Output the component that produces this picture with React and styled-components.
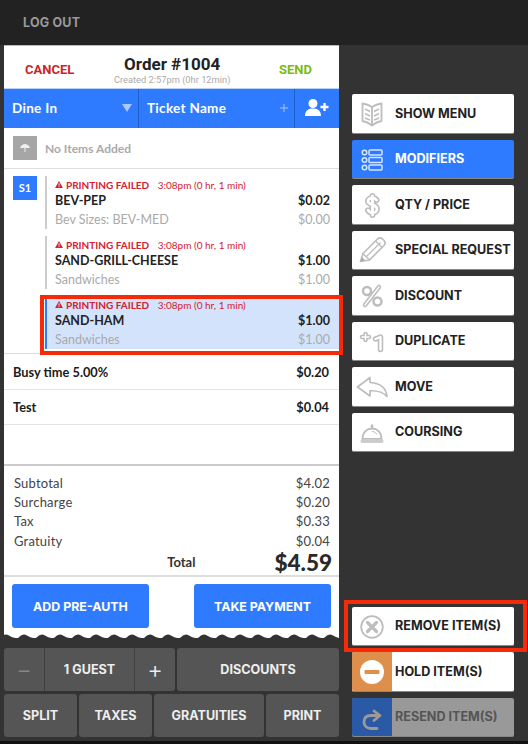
import React from "react"
import styled, { createGlobalStyle } from "styled-components"

const Global = createGlobalStyle`
  html, body { margin: 0; padding: 0; background: #333; }
  body { width: 528px; height: 744px; overflow: hidden; font-family: "Lato", "Liberation Sans", sans-serif; }
  * { box-sizing: border-box; }
`

const Page = styled.div`
  width: 528px;
  height: 744px;
  background: #333;
  display: flex;
  flex-direction: column;
  position: relative;
`
const TopBar = styled.div`
  height: 45px;
  flex: none;
  background: #222;
  color: #999;
  font: 700 12.5px "Inter", sans-serif;
  letter-spacing: 0.2px;
  padding: 0 23px;
  display: flex;
  align-items: center;
`
const Body = styled.div`
  flex: 1;
  display: flex;
  padding-left: 4px;
  min-height: 0;
`
const BottomStrip = styled.div`
  height: 3px;
  flex: none;
  background: #111;
`
const Left = styled.div`
  width: 335px;
  flex: none;
  display: flex;
  flex-direction: column;
`
const Ticket = styled.div`
  height: 593px;
  flex: none;
  background: #fff;
  display: flex;
  flex-direction: column;
  position: relative;
  border-top: 1px solid #bbb;
`
const Header = styled.div`
  height: 42px;
  flex: none;
  display: flex;
  justify-content: space-between;
  padding: 0 27px 0 21px;
  align-items: center;
`
const HeaderCenter = styled.div`
  display: flex;
  flex-direction: column;
  align-items: center;
  padding-top: 5px;
  margin-right: 9px;
`
const OrderTitle = styled.div`
  font: 700 17px/20px "Roboto", sans-serif;
  color: #222;
`
const Created = styled.div`
  font: 400 9.3px/11px "Roboto", sans-serif;
  color: #aaa;
`
const HeaderAction = styled.div`
  font: 700 13px "Roboto", sans-serif;
  color: ${p => p.$color};
  padding-top: 5px;
`
const BlueBar = styled.div`
  height: 40px;
  flex: none;
  display: flex;
  background: #2f7bff;
  color: #fff;
  border-top: 1px solid #b9d2f5;
  font: 700 13.5px "Lato", sans-serif;
  letter-spacing: 0.3px;
`
const BlueCell = styled.div`
  width: ${p => p.$w}px;
  flex: none;
  display: flex;
  align-items: center;
  justify-content: space-between;
  padding: 0 6px 2px 8px;
  border-right: ${p => (p.$last ? "none" : "1px solid #1d5fcb")};
`
const EmptyRow = styled.div`
  height: 41px;
  flex: none;
  display: flex;
  align-items: center;
  gap: 8px;
  padding-left: 9px;
  border-bottom: 1px solid #ddd;
  color: #aaa;
  font: 700 12px "Lato", sans-serif;
`
const EmptyBox = styled.div`
  width: 24px;
  height: 24px;
  background: #a6a6a6;
  display: flex;
  align-items: center;
  justify-content: center;
`
const Seat = styled.div`
  height: 185px;
  flex: none;
  display: flex;
  padding: 7px 0 0 9px;
  border-bottom: 1px solid #ddd;
`
const SeatBadge = styled.div`
  width: 24px;
  height: 24px;
  flex: none;
  background: #2f7bff;
  color: #fff;
  font: 700 11px/24px "Lato", sans-serif;
  text-align: center;
`
const Items = styled.div`
  flex: 1;
  display: flex;
  flex-direction: column;
  gap: 7px;
  padding-left: 8px;
`
const Item = styled.div`
  height: 53px;
  padding: 2px 9px 0 8px;
  border-left: 2px solid ${p => (p.$selected ? "#2f7bff" : "#ccc")};
  background: ${p => (p.$selected ? "#d3e3fb" : "transparent")};
  position: relative;
`
const Failed = styled.div`
  display: flex;
  align-items: center;
  gap: 2px;
  height: 13px;
  color: #d3202f;
  font: 400 10px "Lato", sans-serif;
  strong { font-weight: 700; margin-right: 6.5px; }
`
const ItemLine = styled.div`
  display: flex;
  justify-content: space-between;
  align-items: center;
  height: ${p => (p.$sub ? 20 : 18)}px;
  color: ${p => (p.$sub ? "#aaa" : "#222")};
  font: ${p => (p.$sub ? 400 : 700)} 12.5px "Lato", sans-serif;
`
const ChargeRow = styled.div`
  height: ${p => p.$h}px;
  flex: none;
  display: flex;
  justify-content: space-between;
  align-items: center;
  padding: 0 10px 0 9px;
  border-bottom: 1px solid #e4e4e4;
  color: #1c1c1c;
  font: 700 12.8px "Lato", sans-serif;
`
const Gap = styled.div`
  height: 41px;
  flex: none;
  border-bottom: 2px solid #ccc;
`
const Totals = styled.div`
  height: 111px;
  flex: none;
  padding: 7px 9px 0 10px;
  border-bottom: 2px solid #ddd;
`
const TotalLine = styled.div`
  height: 19.3px;
  display: flex;
  justify-content: space-between;
  align-items: center;
  color: #444;
  font: 400 13px "Lato", sans-serif;
  letter-spacing: 0.2px;
`
const GrandLine = styled.div`
  display: flex;
  justify-content: flex-end;
  align-items: center;
  gap: 79px;
  margin-right: -2px;
  height: 24px;
  color: #333;
`
const GrandLabel = styled.span`
  font: 700 13px "Lato", sans-serif;
`
const GrandValue = styled.span`
  font: 900 22.5px "Lato", sans-serif;
  color: #2a2a2a;
`
const Payments = styled.div`
  display: flex;
  justify-content: space-between;
  padding: 7px 8px 0 8px;
`
const PayButton = styled.div`
  width: 137px;
  height: 44px;
  background: #2f7bff;
  border-radius: 3px;
  color: #fff;
  font: 700 12.4px "Inter", sans-serif;
  display: flex;
  align-items: center;
  justify-content: center;
`
const WaveEdge = styled.svg`
  position: absolute;
  left: 0;
  bottom: 0;
  display: block;
`
const Controls = styled.div`
  margin-top: 10px;
  display: flex;
  flex-direction: column;
  gap: 3px;
`
const ControlRow = styled.div`
  display: flex;
  gap: 2px;
  height: 43px;
`
const Guests = styled.div`
  width: 171px;
  flex: none;
  display: flex;
  background: #555;
  border-radius: 3px;
`
const GuestCell = styled.div`
  width: ${p => p.$w}px;
  flex: none;
  display: flex;
  align-items: center;
  justify-content: center;
  color: ${p => p.$color || "#eee"};
  font: ${p => (p.$big ? "300 24px" : "700 12.6px")} "Inter", sans-serif;
  border-right: ${p => (p.$divided ? "1px solid #3f3f3f" : "none")};
`
const ControlButton = styled.div`
  flex: ${p => (p.$w ? `none` : 1)};
  width: ${p => (p.$w ? `${p.$w}px` : "auto")};
  background: #555;
  border-radius: 3px;
  color: #eee;
  font: 700 12.6px "Inter", sans-serif;
  display: flex;
  align-items: center;
  justify-content: center;
  padding-bottom: ${p => (p.$lift ? 1 : 0)}px;
`
const Side = styled.div`
  width: 162px;
  flex: none;
  margin-left: 13px;
  padding: 49px 0 4px;
  display: flex;
  flex-direction: column;
  gap: 6px;
`
const ActionButton = styled.div`
  height: 39.5px;
  flex: none;
  display: flex;
  align-items: center;
  border-radius: 2px;
  position: relative;
  background: ${p => p.$bg || "#fff"};
  color: ${p => p.$color || "#222"};
  font: 700 12.6px "Inter", sans-serif;
  border-bottom: 1px solid #888;
  margin-top: ${p => (p.$push ? "auto" : 0)};
`
const IconCell = styled.div`
  width: 40px;
  height: 100%;
  flex: none;
  background: ${p => p.$bg || "transparent"};
  border-radius: 2px 0 0 2px;
  margin-right: 3px;
`
const RedBox = styled.div`
  position: absolute;
  border: 4px solid #f52a09;
  pointer-events: none;
  left: ${p => p.$l}px;
  top: ${p => p.$t}px;
  width: ${p => p.$w}px;
  height: ${p => p.$h}px;
`

const GRAY = "#bdbdbd"

// two strokes on top of each other give the hollow outlined look of the icons
const Hollow = ({ d, w = 5, color = GRAY }) => (
  <>
    <path d={d} fill="none" stroke={color} strokeWidth={w} strokeLinecap="round" strokeLinejoin="round" />
    <path d={d} fill="none" stroke="#fff" strokeWidth={w - 3.2} strokeLinecap="round" strokeLinejoin="round" />
  </>
)

const Svg = ({ children }) => (
  <svg width="40" height="40" viewBox="0 0 40 40" style={{ display: "block" }}>{children}</svg>
)

const icons = {
  book: (
    <Svg>
      <path d="M20 13 C17 11 14 10 10.500 9.500 V27 C14 27.500 17 29 20 31.500 C23 29 26 27.500 29.500 27 V9.500 C26 10 23 11 20 13 Z M20 13 V31" fill="none" stroke={GRAY} strokeWidth="1.800" strokeLinejoin="round" />
      <path d="M13 15 L18 17.500 M13 19.500 L18 22 M13 24 L18 26 M27 15 L22 17.500 M27 19.500 L22 22 M27 24 L22 26" fill="none" stroke={GRAY} strokeWidth="1.500" />
    </Svg>
  ),
  modifiers: (
    <Svg>
      <g fill="none" stroke="#d6e5ff" strokeWidth="1.500">
        <circle cx="12.500" cy="12.500" r="2.300" />
        <circle cx="12.500" cy="20" r="2.300" />
        <circle cx="12.500" cy="27.500" r="2.300" />
        <rect x="17" y="10" width="13" height="5" rx="1" />
        <rect x="17" y="17.500" width="13" height="5" rx="1" />
        <rect x="17" y="25" width="13" height="5" rx="1" />
      </g>
    </Svg>
  ),
  dollar: (
    <Svg>
      <Hollow w={6} d="M24.500 15 C23.500 13.500 22 13 20.500 13 C18 13 16 14.300 16 16.300 C16 20.500 25 18.700 25 24 C25 26.300 23 27.700 20.500 27.700 C18.500 27.700 17 27 16 25.300 M20.500 11 V30" />
    </Svg>
  ),
  pencil: (
    <Svg>
      <path d="M8.500 30.500 L11 22.500 L25.500 8 C27 6.700 29 6.700 30.500 8 L32 9.500 C33.300 11 33.300 13 32 14.500 L17.500 29 Z" fill="#fff" stroke={GRAY} strokeWidth="1.700" strokeLinejoin="round" />
      <path d="M11 22.500 L17.500 29 M14.500 25.500 L28.500 11.500 M23.500 10 L30 16.500" fill="none" stroke={GRAY} strokeWidth="1.300" />
      <path d="M8.500 30.500 L9.800 26 L13.200 29.300 Z" fill="#aaa" />
    </Svg>
  ),
  percent: (
    <Svg>
      <Hollow w={4.500} d="M27 11 L13 29" />
      <circle cx="15" cy="15" r="4" fill="#fff" stroke={GRAY} strokeWidth="2.500" />
      <circle cx="25.500" cy="25.500" r="4" fill="#fff" stroke={GRAY} strokeWidth="2.500" />
    </Svg>
  ),
  plusOne: (
    <Svg>
      <Hollow w={4.600} d="M10 15 H17 M13.500 12 V18" />
      <Hollow w={5.500} d="M23.500 17 L28.500 15 V27.500" />
    </Svg>
  ),
  move: (
    <Svg>
      <path d="M5.500 20 L18 10.500 V15.500 C27 16 34 20 35 29.500 C31 25 26 23.500 18 23.800 V29 Z" fill="#fff" stroke={GRAY} strokeWidth="1.700" strokeLinejoin="round" />
    </Svg>
  ),
  bell: (
    <Svg>
      <path d="M10.500 26 C10.500 19 15 15.500 20 15.500 C25 15.500 29.500 19 29.500 26 Z" fill="#fff" stroke={GRAY} strokeWidth="1.800" />
      <path d="M20 15 V12.500" stroke={GRAY} strokeWidth="2.500" strokeLinecap="round" />
      <rect x="8.500" y="26" width="23" height="4" rx="2" fill="#ccc" />
      <path d="M20 18.500 C22 18.500 24 19.500 25 21.500" fill="none" stroke={GRAY} strokeWidth="1" />
    </Svg>
  ),
  remove: (
    <Svg>
      <circle cx="20" cy="20" r="10.800" fill="#fff" stroke={GRAY} strokeWidth="1.800" />
      <path d="M15.500 15.500 L24.500 24.500 M24.500 15.500 L15.500 24.500" stroke={GRAY} strokeWidth="3.200" strokeLinecap="round" />
    </Svg>
  ),
  hold: (
    <Svg>
      <circle cx="20" cy="20" r="12" fill="#fff" />
      <rect x="12.500" y="18" width="15" height="4" rx="1" fill="#dd8f4b" />
    </Svg>
  ),
  resend: (
    <Svg>
      <path d="M22 13 L28 17.500 L22 22.500 M27 17.500 H19 C14.500 17.500 12 20 12 24 C12 28 15 30.500 19 30.500 H25" fill="none" stroke="#9a9a9a" strokeWidth="2.800" strokeLinejoin="round" strokeLinecap="round" />
    </Svg>
  ),
}

const Warn = () => (
  <svg width="8" height="7" viewBox="0 0 9 8" style={{ marginRight: 1 }}>
    <path d="M4.500 0 L9 8 H0 Z" fill="#d3202f" />
    <rect x="4" y="2.600" width="1" height="2.800" fill="#fff" />
    <rect x="4" y="6" width="1" height="1" fill="#fff" />
  </svg>
)

const lineItems = [
  { name: "BEV-PEP", price: "$0.02", sub: "Bev Sizes: BEV-MED", subPrice: "$0.00" },
  { name: "SAND-GRILL-CHEESE", price: "$1.00", sub: "Sandwiches", subPrice: "$1.00" },
  { name: "SAND-HAM", price: "$1.00", sub: "Sandwiches", subPrice: "$1.00", selected: true },
]

const totals = [
  ["Subtotal", "$4.02"],
  ["Surcharge", "$0.20"],
  ["Tax", "$0.33"],
  ["Gratuity", "$0.04"],
]

const actions = [
  { label: "SHOW MENU", icon: "book" },
  { label: "MODIFIERS", icon: "modifiers", bg: "#2f7bff", color: "#fff" },
  { label: "QTY / PRICE", icon: "dollar" },
  { label: "SPECIAL REQUEST", icon: "pencil" },
  { label: "DISCOUNT", icon: "percent" },
  { label: "DUPLICATE", icon: "plusOne" },
  { label: "MOVE", icon: "move" },
  { label: "COURSING", icon: "bell" },
  { label: "REMOVE ITEM(S)", icon: "remove", push: true },
  { label: "HOLD ITEM(S)", icon: "hold", cell: "#dd8f4b" },
  { label: "RESEND ITEM(S)", icon: "resend", cell: "#2a5aa5", bg: "#999", color: "#555" },
]

const App = () => {
  return (
    <Page>
      <Global />
      <TopBar>LOG OUT</TopBar>
      <Body>
        <Left>
          <Ticket>
            <Header>
              <HeaderAction $color="#c9272b">CANCEL</HeaderAction>
              <HeaderCenter>
                <OrderTitle>Order #1004</OrderTitle>
                <Created>Created 2:57pm (0hr 12min)</Created>
              </HeaderCenter>
              <HeaderAction $color="#7cbb10">SEND</HeaderAction>
            </Header>
            <BlueBar>
              <BlueCell $w={135}>
                Dine In
                <svg width="10" height="8" viewBox="0 0 10 8"><path d="M0 0 H10 L5 8 Z" fill="#a9c8fb" /></svg>
              </BlueCell>
              <BlueCell $w={156}>
                Ticket Name
                <svg width="8" height="8" viewBox="0 0 8 8"><path d="M4 0 V8 M0 4 H8" stroke="#a9c8fb" strokeWidth="1" /></svg>
              </BlueCell>
              <BlueCell $w={44} $last>
                <svg width="24" height="17" viewBox="0 0 24 17" style={{ marginLeft: 2 }}>
                  <circle cx="8" cy="4.500" r="4.500" fill="#fff" />
                  <path d="M0 17 C0 11 4 9.500 8 9.500 C12 9.500 16 11 16 17 Z" fill="#fff" />
                  <path d="M19.500 4 V12 M15.500 8 H23.500" stroke="#fff" strokeWidth="2.400" />
                </svg>
              </BlueCell>
            </BlueBar>
            <EmptyRow>
              <EmptyBox>
                <svg width="10" height="8" viewBox="0 0 10 8">
                  <path d="M0 4 C1 1 3 0 5 0 C7 0 9 1 10 4 Z M4.500 4 H5.500 V8 H4.500 Z" fill="#eee" />
                </svg>
              </EmptyBox>
              No Items Added
            </EmptyRow>
            <Seat>
              <SeatBadge>S1</SeatBadge>
              <Items>
                {lineItems.map((item, i) => (
                  <Item key={i} $selected={item.selected}>
                    <Failed>
                      <Warn />
                      <strong>PRINTING FAILED</strong> 3:08pm (0 hr, 1 min)
                    </Failed>
                    <ItemLine>
                      <span>{item.name}</span>
                      <span>{item.price}</span>
                    </ItemLine>
                    <ItemLine $sub>
                      <span>{item.sub}</span>
                      <span>{item.subPrice}</span>
                    </ItemLine>
                  </Item>
                ))}
              </Items>
            </Seat>
            <ChargeRow $h={36}>
              <span>Busy time 5.00%</span>
              <span>$0.20</span>
            </ChargeRow>
            <ChargeRow $h={35}>
              <span>Test</span>
              <span>$0.04</span>
            </ChargeRow>
            <Gap />
            <Totals>
              {totals.map(([label, value]) => (
                <TotalLine key={label}>
                  <span>{label}</span>
                  <span>{value}</span>
                </TotalLine>
              ))}
              <GrandLine>
                <GrandLabel>Total</GrandLabel>
                <GrandValue>$4.59</GrandValue>
              </GrandLine>
            </Totals>
            <Payments>
              <PayButton>ADD PRE-AUTH</PayButton>
              <PayButton>TAKE PAYMENT</PayButton>
            </Payments>
            <WaveEdge width="335" height="4" viewBox="0 0 335 4">
              <path
                d={"M0 4 L-4 4 " + Array.from({ length: 20 }, () => "q4.500 -5.500 9 -2.500 q4.500 3 9 2.500").join(" ") + " Z"}
                fill="#333"
              />
            </WaveEdge>
          </Ticket>
          <Controls>
            <ControlRow>
              <Guests>
                <GuestCell $w={41} $big $color="#888" $divided>&minus;</GuestCell>
                <GuestCell $w={90} $divided>1 GUEST</GuestCell>
                <GuestCell $w={40} $big>+</GuestCell>
              </Guests>
              <ControlButton>DISCOUNTS</ControlButton>
            </ControlRow>
            <ControlRow>
              <ControlButton $w={73} $lift>SPLIT</ControlButton>
              <ControlButton $w={73} $lift>TAXES</ControlButton>
              <ControlButton $lift>GRATUITIES</ControlButton>
              <ControlButton $w={73} $lift>PRINT</ControlButton>
            </ControlRow>
          </Controls>
        </Left>
        <Side>
          {actions.map(a => (
            <ActionButton key={a.label} $bg={a.bg} $color={a.color} $push={a.push}>
              <IconCell $bg={a.cell}>{icons[a.icon]}</IconCell>
              {a.label}
            </ActionButton>
          ))}
        </Side>
      </Body>
      <BottomStrip />
      <RedBox $l={40} $t={295} $w={303} $h={60} />
      <RedBox $l={344} $t={600} $w={183} $h={52} />
    </Page>
  )
}

export default App
